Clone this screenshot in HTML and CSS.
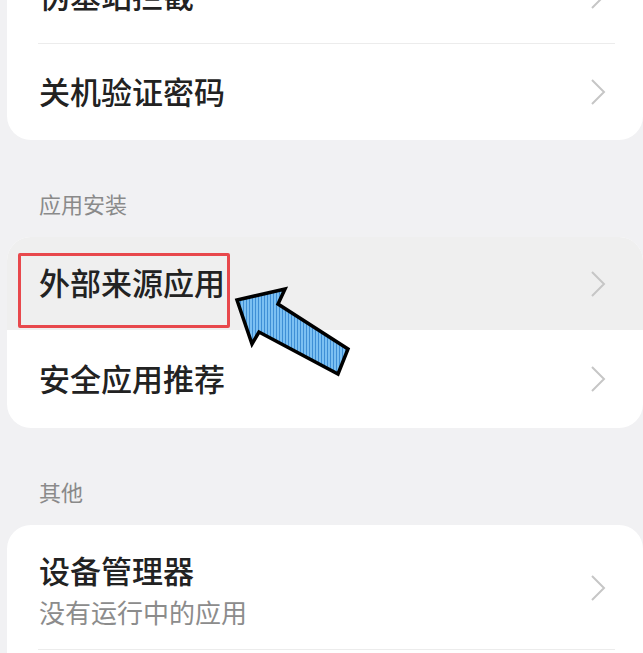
FILE: index.html
```html
<!DOCTYPE html>
<html lang="zh-CN">
<head>
    <meta charset="UTF-8">
    <meta name="viewport" content="width=device-width, initial-scale=1.0">
    <title>安全设置</title>
    <link rel="stylesheet" href="styles.css">
</head>
<body>
    <div class="page">
        <div class="card">
            <div class="row divided">
                <span class="label">伪基站拦截</span>
                <svg class="chevron" viewBox="0 0 16 28"><path d="M2 2 L14 14 L2 26"/></svg>
            </div>
            <div class="row">
                <span class="label">关机验证密码</span>
                <svg class="chevron" viewBox="0 0 16 28"><path d="M2 2 L14 14 L2 26"/></svg>
            </div>
        </div>

        <div class="section_title">应用安装</div>
        <div class="card">
            <div class="row pressed">
                <span class="label">外部来源应用</span>
                <!-- annotation box + arrow -->
                <div class="mark_box"></div>
                <svg class="arrow" viewBox="0 0 130 100" width="130" height="100">
                    <defs>
                        <pattern id="stripes" width="3" height="4" patternUnits="userSpaceOnUse">
                            <rect width="3" height="4" fill="#7cc0f2"/>
                            <rect width="1" height="4" fill="#3f8fd6"/>
                        </pattern>
                    </defs>
                    <polygon points="6,30 54,19 47,34 117,79 107,104 28,62 21,74" fill="url(#stripes)" stroke="#000" stroke-width="3.5" stroke-linejoin="miter"/>
                </svg>
                <svg class="chevron" viewBox="0 0 16 28"><path d="M2 2 L14 14 L2 26"/></svg>
            </div>
            <div class="row last">
                <span class="label">安全应用推荐</span>
                <svg class="chevron" viewBox="0 0 16 28"><path d="M2 2 L14 14 L2 26"/></svg>
            </div>
        </div>

        <div class="section_title">其他</div>
        <div class="card">
            <div class="row tall divided">
                <div class="text">
                    <span class="label">设备管理器</span>
                    <span class="sub">没有运行中的应用</span>
                </div>
                <svg class="chevron" viewBox="0 0 16 28"><path d="M2 2 L14 14 L2 26"/></svg>
            </div>
            <div class="row"></div>
        </div>
    </div>
</body>
</html>
```

FILE: styles.css
```css
body{
    margin: 0;
    background-color: #f1f1f3;
    font-family: "Noto Sans CJK SC", "Noto Sans", sans-serif;
    overflow: hidden;
}
.page{
    margin-top: -52px;
    padding-left: 7px;
    width: 636px;
}
.card{
    background-color: #fff;
    border-radius: 24px;
    overflow: hidden;
}
.row{
    position: relative;
    height: 96px;
    display: flex;
    align-items: center;
    justify-content: space-between;
    padding: 0 37px 0 32px;
}
.row.divided::after{
    content: '';
    position: absolute;
    left: 31px;
    right: 28px;
    bottom: 0;
    height: 1px;
    background-color: #ececec;
}
.row.pressed{
    background-color: #efefef;
    height: 93px;
}
.row.last{
    height: 98px;
}
.row.tall{
    height: 125px;
}
.label{
    font-size: 31px;
    font-weight: 500;
    color: #222;
    line-height: 40px;
    margin-top: -3px;
}
.text{
    display: flex;
    flex-direction: column;
    align-self: flex-start;
    padding-top: 25px;
}
.text .label{
    margin-top: 0;
}
.sub{
    font-size: 26px;
    color: #8c8c8c;
    line-height: 38px;
    margin-top: 3px;
}
.chevron{
    width: 16px;
    height: 28px;
    fill: none;
    stroke: #c6c6c6;
    stroke-width: 2;
}
.section_title{
    font-size: 22px;
    color: #8a8a8a;
    padding: 48px 0 19px 32px;
    line-height: 30px;
}
.mark_box{
    position: absolute;
    left: 11px;
    top: 16px;
    width: 206px;
    height: 69px;
    border: 3px solid #e8484c;
    border-radius: 2px;
}
.arrow{
    position: absolute;
    left: 224px;
    top: 33px;
    overflow: visible;
    z-index: 2;
}
```
